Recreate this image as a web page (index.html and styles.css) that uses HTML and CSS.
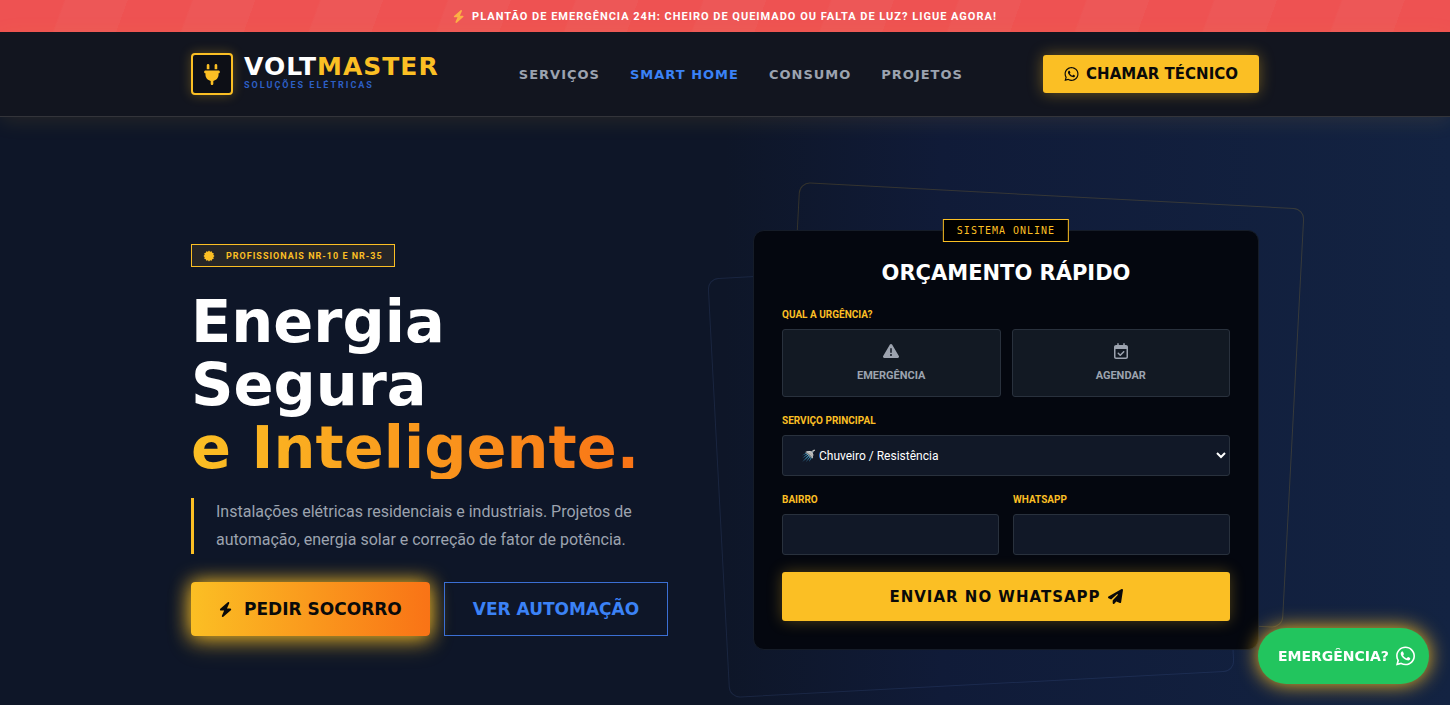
FILE: index.html
```html
<!DOCTYPE html>
<html lang="pt-BR">
<head>
  <meta charset="UTF-8">
  <meta name="viewport" content="width=device-width, initial-scale=1.0">
  <title>VoltMaster - Soluções Elétricas</title>
  <link rel="stylesheet" href="styles.css">
</head>
<body>
  <!-- Shared icons -->
  <svg class="icon-defs" aria-hidden="true">
    <symbol id="icon-bolt" viewBox="0 0 512 512">
      <path d="M349 45c6-13 2-28-10-37s-28-8-39 2L44 234c-10 9-14 23-9 35s17 21 30 21h112L99 467c-6 13-2 28 10 37s28 8 39-2l256-224c10-9 14-23 9-35s-17-20-30-20H271z"/>
    </symbol>
    <symbol id="icon-whatsapp" viewBox="0 0 448 512">
      <path d="M380.900 97.100C339 55.100 283.200 32 223.900 32c-122.400 0-222 99.600-222 222 0 39.100 10.200 77.300 29.600 111L0 480l117.700-30.900c32.400 17.700 68.900 27 106.100 27h.1c122.300 0 224.100-99.600 224.100-222 0-59.300-25.200-115-67.100-157zm-157 341.600c-33.200 0-65.700-8.900-94-25.700l-6.700-4-69.800 18.300L72 359.200l-4.400-7c-18.500-29.400-28.200-63.300-28.200-98.200 0-101.700 82.800-184.500 184.600-184.500 49.300 0 95.600 19.200 130.400 54.100 34.800 34.900 56.200 81.200 56.100 130.500 0 101.800-84.900 184.600-186.600 184.600zm101.200-138.200c-5.500-2.800-32.800-16.200-37.900-18-5.100-1.900-8.800-2.800-12.500 2.800-3.700 5.600-14.300 18-17.600 21.800-3.200 3.700-6.500 4.200-12 1.400-32.600-16.300-54-29.100-75.500-66-5.700-9.800 5.700-9.100 16.300-30.300 1.800-3.700.9-6.900-.5-9.700-1.400-2.800-12.500-30.100-17.100-41.200-4.500-10.800-9.100-9.300-12.500-9.500-3.200-.2-6.900-.2-10.600-.2-3.700 0-9.700 1.400-14.800 6.900-5.100 5.600-19.400 19-19.400 46.300 0 27.300 19.900 53.700 22.600 57.400 2.800 3.700 39.100 59.700 94.800 83.800 35.200 15.200 49 16.500 66.600 13.900 10.700-1.600 32.800-13.400 37.400-26.400 4.600-13 4.600-24.100 3.200-26.400-1.300-2.500-5-3.900-10.500-6.600z"/>
    </symbol>
  </svg>

  <!-- Emergency alert -->
  <div class="alert-bar">
    <svg class="alert-icon"><use href="#icon-bolt"/></svg>
    <span>Plantão de Emergência 24h: Cheiro de queimado ou falta de luz? Ligue Agora!</span>
  </div>

  <!-- Header -->
  <header class="header">
    <div class="container header-content">
      <a href="#" class="logo">
        <span class="logo-icon">
          <svg viewBox="0 0 384 512">
            <path d="M96 0C78.300 0 64 14.300 64 32v96h64V32c0-17.700-14.300-32-32-32zm192 0c-17.700 0-32 14.300-32 32v96h64V32c0-17.700-14.300-32-32-32zM32 160c-17.700 0-32 14.300-32 32s14.300 32 32 32v32c0 77.400 55 142 128 156.800V480c0 17.700 14.300 32 32 32s32-14.300 32-32v-67.200C297 398 352 333.400 352 256v-32c17.700 0 32-14.300 32-32s-14.300-32-32-32z"/>
          </svg>
        </span>
        <span class="logo-text">
          <span class="logo-name">VOLT<span class="highlight">MASTER</span></span>
          <span class="logo-tagline">Soluções Elétricas</span>
        </span>
      </a>

      <nav class="menu">
        <a href="#servicos">Serviços</a>
        <a href="#smart-home" class="active">Smart Home</a>
        <a href="#consumo">Consumo</a>
        <a href="#projetos">Projetos</a>
      </nav>

      <a href="#contato" class="btn-call">
        <svg><use href="#icon-whatsapp"/></svg>
        Chamar Técnico
      </a>
    </div>
  </header>

  <!-- Hero -->
  <main class="hero">
    <div class="container hero-grid">
      <section class="hero-text">
        <div class="badge">
          <svg viewBox="0 0 24 24">
            <path d="M12 1l2.300 2.500L17.500 2.500l.9 3.200 3.200.9-1 3.100L23 12l-2.400 2.300 1 3.100-3.200.9-.9 3.200-3.200-1L12 23l-2.300-2.500-3.200 1-.9-3.200-3.200-.9 1-3.100L1 12l2.400-2.300-1-3.100 3.200-.9.9-3.200 3.200 1z"/>
          </svg>
          Profissionais NR-10 e NR-35
        </div>
        <h1>Energia Segura<br><span class="gradient-text">e Inteligente.</span></h1>
        <p class="hero-description">Instalações elétricas residenciais e industriais. Projetos de automação, energia solar e correção de fator de potência.</p>
        <div class="hero-actions">
          <a href="#orcamento" class="btn-primary">
            <svg><use href="#icon-bolt"/></svg>
            Pedir Socorro
          </a>
          <a href="#smart-home" class="btn-outline">Ver Automação</a>
        </div>
      </section>

      <!-- Quote form -->
      <section class="quote" id="orcamento">
        <div class="frame frame-yellow"></div>
        <div class="frame frame-blue"></div>
        <form class="quote-card">
          <span class="status">Sistema Online</span>
          <h2>Orçamento Rápido</h2>

          <fieldset class="field">
            <legend>Qual a urgência?</legend>
            <div class="options">
              <label class="option">
                <input type="radio" name="urgencia" value="emergencia">
                <svg viewBox="0 0 512 512">
                  <path fill-rule="evenodd" d="M256 32c14.200 0 27.300 7.500 34.500 19.800l216 368c7.300 12.400 7.300 27.700.2 40.100S486.300 480 472 480H40c-14.300 0-27.600-7.700-34.700-20.100s-7-27.800.2-40.100l216-368C228.700 39.500 241.800 32 256 32zm0 128c-13.300 0-24 10.700-24 24v112c0 13.300 10.700 24 24 24s24-10.700 24-24V184c0-13.300-10.700-24-24-24zm32 224a32 32 0 1 0-64 0 32 32 0 1 0 64 0z"/>
                </svg>
                <span>Emergência</span>
              </label>
              <label class="option">
                <input type="radio" name="urgencia" value="agendar">
                <svg viewBox="0 0 448 512">
                  <path fill-rule="evenodd" d="M128 0c13.300 0 24 10.700 24 24v40h144V24c0-13.300 10.700-24 24-24s24 10.700 24 24v40h40c35.300 0 64 28.700 64 64v320c0 35.300-28.700 64-64 64H64c-35.300 0-64-28.700-64-64V128c0-35.300 28.700-64 64-64h40V24c0-13.300 10.700-24 24-24zM48 192v256c0 8.800 7.200 16 16 16h320c8.800 0 16-7.200 16-16V192zm281 105L217 409c-9.400 9.400-24.600 9.400-33.900 0l-64-64c-9.400-9.400-9.400-24.600 0-33.900s24.600-9.400 33.900 0l47 47 95-95c9.400-9.400 24.600-9.400 33.900 0s9.400 24.600 0 33.900z"/>
                </svg>
                <span>Agendar</span>
              </label>
            </div>
          </fieldset>

          <div class="field">
            <label for="servico">Serviço principal</label>
            <select id="servico">
              <option>🚿 Chuveiro / Resistência</option>
            </select>
          </div>

          <div class="field-row">
            <div class="field">
              <label for="bairro">Bairro</label>
              <input type="text" id="bairro">
            </div>
            <div class="field">
              <label for="whatsapp">WhatsApp</label>
              <input type="tel" id="whatsapp">
            </div>
          </div>

          <button type="submit" class="btn-submit">
            Enviar no WhatsApp
            <svg viewBox="0 0 512 512">
              <path d="M498.100 5.600c10.100 7 15.400 19.100 13.500 31.200l-64 416c-1.500 9.700-7.400 18.200-16 23s-18.900 5.400-28 1.600L284 427.700l-68.500 74.100c-8.900 9.700-22.900 12.900-35.200 8.100S160 493.200 160 480v-83.600c0-4 1.500-7.800 4.200-10.800l167.600-182.800c5.800-6.300 5.600-16-.4-22s-15.700-6.400-22-.7L106 360.800l-88.300-44.200C7.100 311.300.3 300.700 0 288.900s5.900-22.800 16.100-28.700l448-256c10.700-6.100 23.900-5.500 34 1.400z"/>
            </svg>
          </button>
        </form>
      </section>
    </div>
  </main>

  <!-- Floating WhatsApp button -->
  <a href="#contato" class="floating-btn">
    Emergência?
    <svg><use href="#icon-whatsapp"/></svg>
  </a>
</body>
</html>
```
FILE: styles.css
```css
* {
  box-sizing: border-box;
  margin: 0;
  padding: 0;
}

body {
  font-family: Roboto, sans-serif;
  font-size: 14px;
  background-color: #0f172a;
  color: #fff;
  min-height: 100vh;
  display: flex;
  flex-direction: column;
}

a {
  text-decoration: none;
  color: inherit;
}

svg {
  display: block;
  fill: currentColor;
}

.icon-defs {
  position: absolute;
  width: 0;
  height: 0;
}

.container {
  width: 100%;
  max-width: 1120px;
  margin: 0 auto;
  padding: 0 26px;
}

/* Alert bar */
.alert-bar {
  display: flex;
  justify-content: center;
  align-items: center;
  gap: 6px;
  height: 32px;
  background: repeating-linear-gradient(110deg, #ee5252 0, #ee5252 60px, #ed5757 62px, #ed5757 120px);
  font-size: 11px;
  font-weight: bold;
  letter-spacing: 1px;
  text-transform: uppercase;
}

.alert-icon {
  width: 13px;
  height: 13px;
  color: #fcb045;
}

/* Header */
.header {
  position: relative;
  background-color: #12151f;
  border-bottom: 1px solid #33343a;
  box-shadow: 0 4px 20px rgba(251, 191, 36, 0.1);
  z-index: 2;
}

.header-content {
  display: flex;
  justify-content: space-between;
  align-items: center;
  height: 84px;
}

.logo {
  display: flex;
  align-items: center;
  gap: 11px;
}

.logo-icon {
  display: flex;
  justify-content: center;
  align-items: center;
  width: 42px;
  height: 42px;
  background-color: #0d0f16;
  border: 2px solid #fbbf24;
  border-radius: 4px;
  color: #fbbf24;
  box-shadow: 0 0 12px rgba(251, 191, 36, 0.3);
}

.logo-icon svg {
  width: 16px;
  height: 21px;
}

.logo-text {
  display: flex;
  flex-direction: column;
}

.logo-name {
  font-family: 'DejaVu Sans', sans-serif;
  font-size: 25px;
  font-weight: bold;
  line-height: 22px;
  letter-spacing: 1px;
}

.highlight {
  color: #fbbf24;
}

.logo-tagline {
  font-size: 9px;
  font-weight: bold;
  line-height: 14px;
  letter-spacing: 2px;
  text-transform: uppercase;
  color: #2d5fc4;
}

.menu {
  display: flex;
  gap: 30px;
  font-family: 'DejaVu Sans', sans-serif;
  font-size: 13px;
  font-weight: bold;
  letter-spacing: 1px;
  text-transform: uppercase;
  color: #9ca3af;
}

.menu .active {
  color: #3b82f6;
}

.btn-call {
  display: flex;
  align-items: center;
  gap: 7px;
  height: 38px;
  padding: 0 21px;
  background-color: #fbbf24;
  border-radius: 3px;
  color: #0a0a0a;
  font-family: 'DejaVu Sans', sans-serif;
  font-size: 15px;
  font-weight: bold;
  text-transform: uppercase;
  box-shadow: 0 0 15px rgba(251, 191, 36, 0.4);
}

.btn-call svg {
  width: 15px;
  height: 16px;
}

/* Hero */
.hero {
  flex: 1;
  background: linear-gradient(to right, #0e1628 50%, #101b38 65%, #132342);
  overflow: hidden;
}

.hero-grid {
  display: grid;
  grid-template-columns: 1fr 1fr;
  align-items: center;
  gap: 56px;
  padding-top: 113px;
}

.badge {
  display: inline-flex;
  align-items: center;
  gap: 11px;
  height: 23px;
  padding: 0 11px;
  background-color: rgba(251, 191, 36, 0.1);
  border: 1px solid #fbbf24;
  color: #fbbf24;
  font-size: 9px;
  font-weight: bold;
  letter-spacing: 1px;
  text-transform: uppercase;
}

.badge svg {
  width: 12px;
  height: 12px;
}

h1 {
  max-width: 450px;
  margin: 23px 0 19px;
  font-family: 'DejaVu Sans', sans-serif;
  font-size: 59px;
  font-weight: bold;
  line-height: 63px;
}

.gradient-text {
  display: inline-block;
  background: linear-gradient(to right, #fbbf24, #f97316);
  background-clip: text;
  -webkit-background-clip: text;
  color: transparent;
}

.hero-description {
  padding-left: 22px;
  border-left: 3px solid #fbbf24;
  color: #9ca3af;
  font-size: 16px;
  line-height: 28px;
}

.hero-actions {
  display: flex;
  gap: 14px;
  margin-top: 28px;
}

.btn-primary,
.btn-outline {
  display: flex;
  align-items: center;
  gap: 10px;
  height: 54px;
  padding: 0 28px;
  font-family: 'DejaVu Sans', sans-serif;
  font-size: 17px;
  font-weight: bold;
  text-transform: uppercase;
}

.btn-primary {
  background: linear-gradient(to right, #fbbf24, #f97316);
  border-radius: 4px;
  color: #0a0a0a;
  box-shadow: 0 0 20px #fbbf24, 0 8px 24px rgba(251, 191, 36, 0.3);
}

.btn-primary svg {
  width: 15px;
  height: 15px;
}

.btn-outline {
  border: 1px solid #3b6fd4;
  color: #3b82f6;
}

/* Quote form */
.quote {
  position: relative;
}

/* Tilted outlines behind the card */
.frame {
  position: absolute;
  width: 100%;
  height: 100%;
  border: 1px solid;
  border-radius: 11px;
}

.frame-yellow {
  top: -35px;
  right: -35px;
  border-color: rgba(251, 191, 36, 0.16);
  transform: rotate(3deg);
}

.frame-blue {
  top: 35px;
  left: -35px;
  border-color: rgba(96, 130, 200, 0.15);
  transform: rotate(-3deg);
}

.quote-card {
  position: relative;
  display: flex;
  flex-direction: column;
  gap: 17px;
  padding: 28px;
  background-color: #04070f;
  border: 1px solid #151c28;
  border-radius: 11px;
}

.status {
  position: absolute;
  top: -12px;
  left: 50%;
  transform: translateX(-50%);
  padding: 0 13px;
  background-color: #000;
  border: 1px solid #fbbf24;
  color: #fbbf24;
  font-family: 'DejaVu Sans Mono', monospace;
  font-size: 10px;
  line-height: 21px;
  letter-spacing: 1px;
  text-transform: uppercase;
  white-space: nowrap;
}

.quote-card h2 {
  margin-bottom: 4px;
  font-family: 'DejaVu Sans', sans-serif;
  font-size: 21px;
  font-weight: bold;
  line-height: 28px;
  text-align: center;
  text-transform: uppercase;
}

.field {
  display: flex;
  flex-direction: column;
  border: none;
  min-width: 0;
}

.field > label,
.field legend {
  margin-bottom: 7px;
  color: #fbbf24;
  font-size: 10px;
  font-weight: bold;
  line-height: 14px;
  text-transform: uppercase;
}

.options {
  display: grid;
  grid-template-columns: 1fr 1fr;
  gap: 11px;
}

.option {
  display: flex;
  flex-direction: column;
  align-items: center;
  justify-content: center;
  gap: 9px;
  height: 68px;
  background-color: #121923;
  border: 1px solid #29313d;
  border-radius: 3px;
  color: #9ca3af;
  font-size: 11px;
  font-weight: bold;
  line-height: 16px;
  text-transform: uppercase;
  cursor: pointer;
}

.option svg {
  width: 16px;
  height: 16px;
}

.option input {
  position: absolute;
  opacity: 0;
}

.field-row {
  display: grid;
  grid-template-columns: 1fr 1fr;
  gap: 14px;
}

.field > input,
.field > select {
  width: 100%;
  height: 41px;
  padding: 0 14px;
  background-color: #111827;
  border: 1px solid #29313d;
  border-radius: 3px;
  color: #fff;
  font-family: inherit;
  font-size: 12px;
}

.field > select {
  padding-right: 0;
}

.btn-submit {
  display: flex;
  justify-content: center;
  align-items: center;
  gap: 7px;
  height: 49px;
  background-color: #fbbf24;
  border: none;
  border-radius: 3px;
  color: #0a0a0a;
  font-family: 'DejaVu Sans', sans-serif;
  font-size: 15px;
  font-weight: bold;
  letter-spacing: 1px;
  text-transform: uppercase;
  box-shadow: 0 0 15px rgba(251, 191, 36, 0.3);
  cursor: pointer;
}

.btn-submit svg {
  width: 15px;
  height: 15px;
}

/* Floating button */
.floating-btn {
  position: fixed;
  right: 21px;
  bottom: 21px;
  z-index: 3;
  display: flex;
  align-items: center;
  gap: 7px;
  height: 56px;
  padding: 0 14px 0 20px;
  background-color: #22c55e;
  border-radius: 28px;
  font-family: 'DejaVu Sans', sans-serif;
  font-size: 14px;
  font-weight: bold;
  text-transform: uppercase;
  box-shadow: 0 0 20px #fbbf24;
}

.floating-btn svg {
  width: 19px;
  height: 22px;
}
```
